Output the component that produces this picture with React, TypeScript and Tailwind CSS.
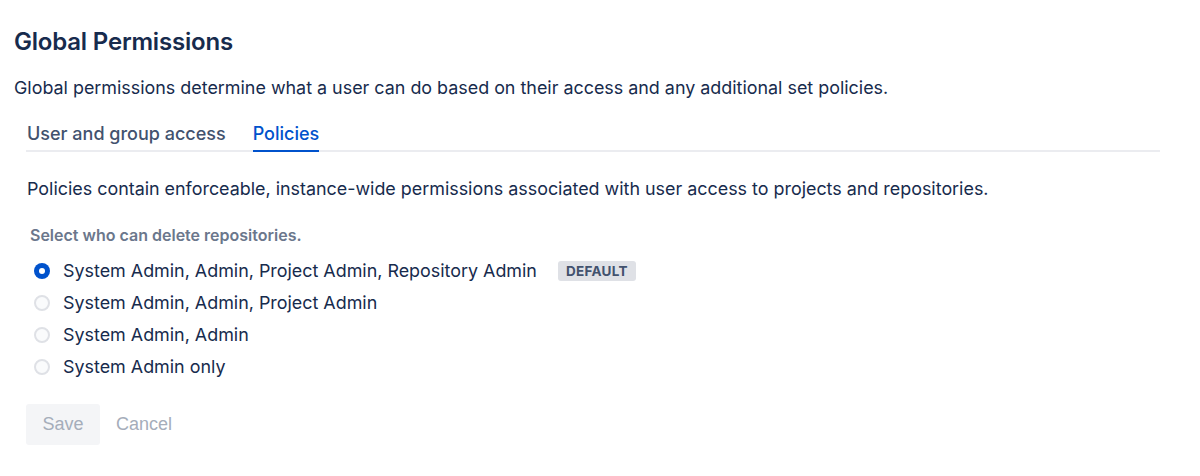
import React from "react";

const options = [
  { label: "System Admin, Admin, Project Admin, Repository Admin", checked: true, badge: true },
  { label: "System Admin, Admin, Project Admin", checked: false },
  { label: "System Admin, Admin", checked: false },
  { label: "System Admin only", checked: false },
];

function Radio({ checked }: { checked: boolean }) {
  if (checked) {
    return (
      <span className="flex h-[16px] w-[16px] shrink-0 items-center justify-center rounded-full bg-[#0052CC]">
        <span className="h-[6px] w-[6px] rounded-full bg-white" />
      </span>
    );
  }
  return <span className="h-[16px] w-[16px] shrink-0 rounded-full border-2 border-[#DFE1E6] bg-[#FAFBFC]" />;
}

export default function App() {
  return (
    <div
      className="min-h-[476px] w-[1200px] bg-white text-[#172B4D]"
      style={{ fontFamily: "Inter, 'Noto Sans', sans-serif" }}
    >
      <div className="pl-[14px] pt-[28px]">
        <h1 className="text-[24px] font-semibold leading-[28px] tracking-[-0.2px]">Global Permissions</h1>
        <p className="mt-[21px] text-[17.9px] leading-[22px]">
          Global permissions determine what a user can do based on their access and any additional set policies.
        </p>
      </div>
      <div className="ml-[26px] mr-[40px] mt-[24px] flex border-b-2 border-[#EBECF0]">
        <div className="flex gap-[27px] pl-[1px]">
          <div className="-mb-[2px] pb-[7px] text-[18px] font-medium leading-[22px] text-[#42526E]">User and group access</div>
          <div className="-mb-[2px] border-b-2 border-[#0052CC] pb-[5px] text-[18px] font-medium leading-[22px] text-[#0052CC]">
            Policies
          </div>
        </div>
      </div>
      <div className="pl-[27px]">
        <p className="mt-[26px] text-[17.9px] leading-[22px]">
          Policies contain enforceable, instance-wide permissions associated with user access to projects and repositories.
        </p>
        <div className="mt-[25px] pl-[3px] text-[16px] font-semibold leading-[20px] text-[#6B778C]">
          Select who can delete repositories.
        </div>
        <div className="mt-[10px] flex flex-col">
          {options.map((o) => (
            <div key={o.label} className="flex h-[32px] items-center gap-[13px] pl-[7px]">
              <Radio checked={o.checked} />
              <span className="text-[17.9px] leading-[22px]">{o.label}</span>
              {o.badge && (
                <span className="ml-[8px] rounded-[3px] bg-[#DFE1E6] px-[8px] py-[3px] text-[13.5px] font-bold leading-[14px] tracking-[0.3px] text-[#42526E]">
                  DEFAULT
                </span>
              )}
            </div>
          ))}
        </div>
        <div
          className="mt-[21px] flex items-center gap-[2px] -ml-[1px]"
          style={{ fontFamily: "'Liberation Sans', Arial, sans-serif" }}
        >
          <button className="h-[41px] w-[74px] rounded-[3px] bg-[#F4F5F7] text-[18px] text-[#A5ADBA]">Save</button>
          <button className="h-[41px] px-[14px] text-[18px] text-[#A5ADBA]">Cancel</button>
        </div>
      </div>
    </div>
  );
}
